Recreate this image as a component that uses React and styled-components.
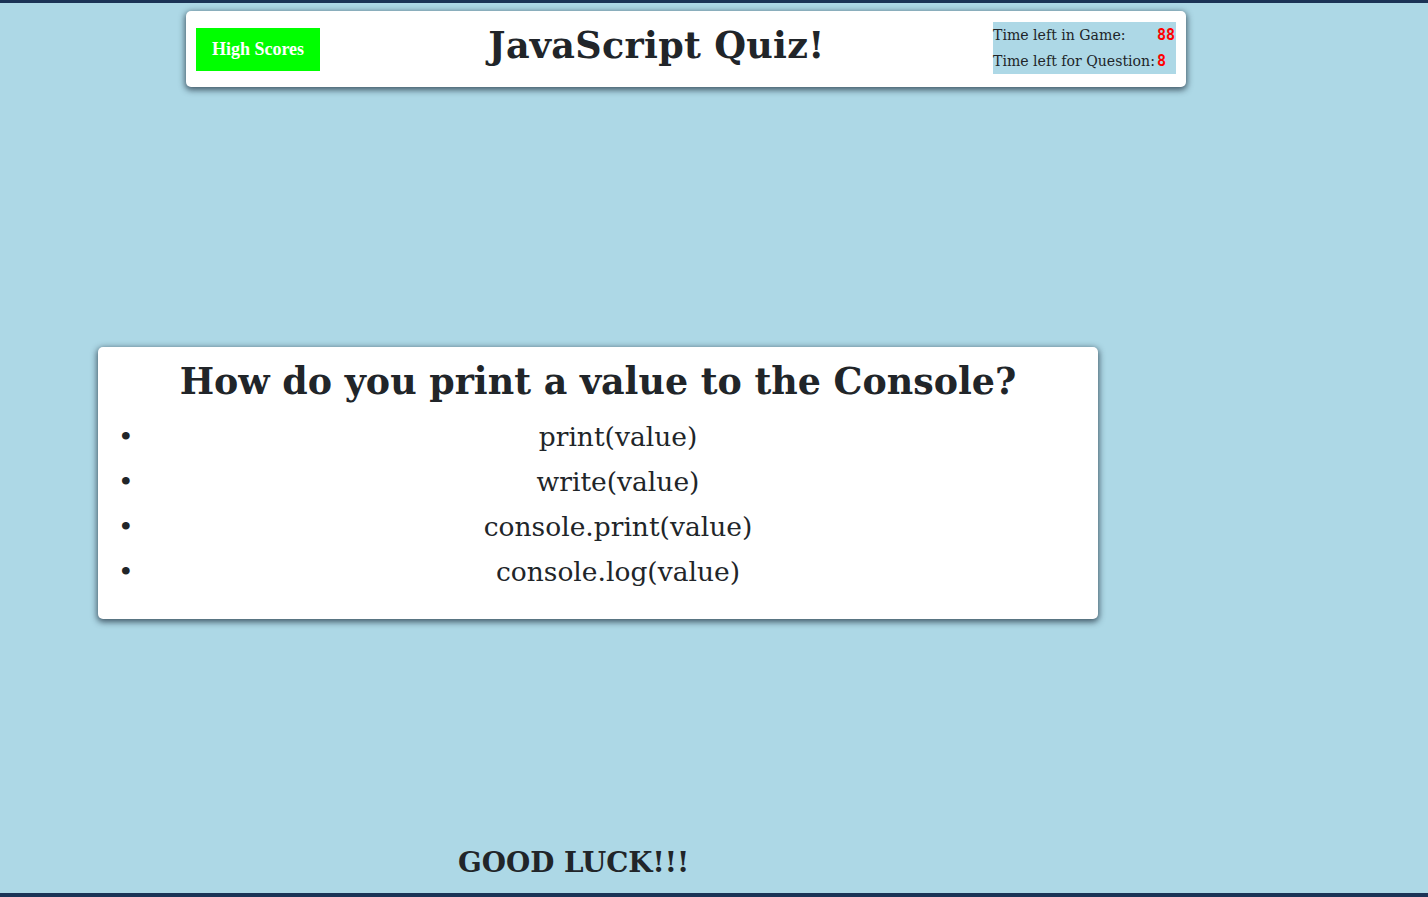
import React from "react";
import styled, { createGlobalStyle } from "styled-components";

const Global = createGlobalStyle`
  html, body { margin: 0; padding: 0; }
  body {
    background: #add8e6;
    color: #212529;
    font-family: "DejaVu Serif", Georgia, serif;
  }
`;

const Page = styled.div`
  box-sizing: border-box;
  height: 897px;
  border-top: 3px solid #1b3356;
  border-bottom: 4px solid #1b3356;
  display: flex;
  flex-direction: column;
  overflow: hidden;
`;

const Card = styled.div`
  box-sizing: border-box;
  width: 1000px;
  background: #fff;
  border-radius: 5px;
  box-shadow: 0 2px 6px 1px rgba(30, 45, 60, 0.75);
  margin-left: ${(p) => p.$left}px;
  margin-top: ${(p) => p.$top}px;
`;

const HeaderBar = styled(Card)`
  height: 76px;
  display: flex;
  align-items: center;
  padding: 0 10px;
`;

const HighScores = styled.button`
  width: 124px;
  height: 43px;
  border: none;
  background: #00ff00;
  color: #fff;
  font-family: "Liberation Serif", "Times New Roman", serif;
  font-weight: bold;
  font-size: 18px;
  padding: 0;
  margin-top: 1px;
`;

const Title = styled.h1`
  flex: 1;
  margin: 0 0 8px;
  text-align: center;
  font-size: 36.5px;
  font-weight: bold;
  letter-spacing: 0.3px;
`;

const Timers = styled.div`
  width: 183px;
  height: 52px;
  background: #add8e6;
  margin-top: -2px;
  display: flex;
  flex-direction: column;
  justify-content: center;
`;

const TimerRow = styled.div`
  display: flex;
  align-items: center;
  height: 26px;
  font-size: 14.1px;
  white-space: nowrap;
`;

const Label = styled.span`
  width: ${(p) => p.$w}px;
`;

const Num = styled.span`
  color: #ff0000;
  font-family: "DejaVu Sans Mono", monospace;
  font-weight: bold;
  font-size: 15px;
`;

const QuestionCard = styled(Card)`
  height: 272px;
  padding-top: 11px;
`;

const Question = styled.h2`
  margin: 0;
  text-align: center;
  font-size: 36.4px;
  font-weight: bold;
  line-height: 48px;
`;

const Answers = styled.ul`
  margin: 0;
  padding-left: 40px;
  padding-top: 8px;
`;

const Answer = styled.li`
  text-align: center;
  font-size: 26.5px;
  line-height: 45px;

  &::marker {
    content: "\\2022\\2006";
  }
`;

const Footer = styled.div`
  margin-top: 227px;
  margin-left: 458px;
  font-size: 27.8px;
  font-weight: bold;
`;

export default function App() {
  const answers = [
    "print(value)",
    "write(value)",
    "console.print(value)",
    "console.log(value)",
  ];
  return (
    <>
      <Global />
      <Page>
        <HeaderBar $left={186} $top={8}>
          <HighScores>High Scores</HighScores>
          <Title>JavaScript Quiz!</Title>
          <Timers>
            <TimerRow>
              <Label $w={164}>Time left in Game:</Label>
              <Num>88</Num>
            </TimerRow>
            <TimerRow>
              <Label $w={164}>Time left for Question:</Label>
              <Num>8</Num>
            </TimerRow>
          </Timers>
        </HeaderBar>
        <QuestionCard $left={98} $top={260}>
          <Question>How do you print a value to the Console?</Question>
          <Answers>
            {answers.map((a) => (
              <Answer key={a}>{a}</Answer>
            ))}
          </Answers>
        </QuestionCard>
        <Footer>GOOD LUCK!!!</Footer>
      </Page>
    </>
  );
}
